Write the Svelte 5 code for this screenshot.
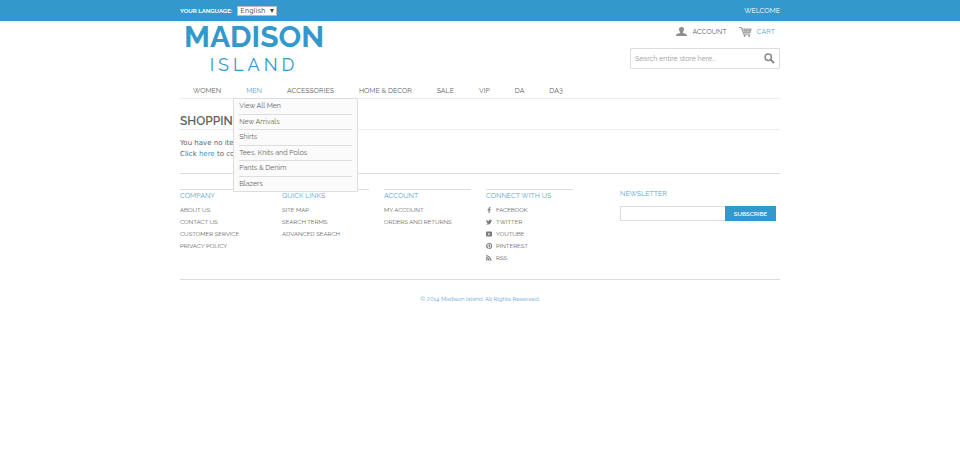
<script>
  const nav = ['WOMEN', 'MEN', 'ACCESSORIES', 'HOME & DECOR', 'SALE', 'VIP', 'DA', 'DA3'];
  const menMenu = ['View All Men', 'New Arrivals', 'Shirts', 'Tees, Knits and Polos', 'Pants & Denim', 'Blazers'];
  const columns = [
    { title: 'COMPANY', links: ['ABOUT US', 'CONTACT US', 'CUSTOMER SERVICE', 'PRIVACY POLICY'] },
    { title: 'QUICK LINKS', links: ['SITE MAP', 'SEARCH TERMS', 'ADVANCED SEARCH'] },
    { title: 'ACCOUNT', links: ['MY ACCOUNT', 'ORDERS AND RETURNS'] }
  ];
  const social = [
    { name: 'FACEBOOK', path: 'M9.5 16V9h2.3l.4-2.8H9.5V4.6c0-.8.3-1.3 1.4-1.3h1.4V.9C12 .8 11.200 .8 10.300 .8 8.100 .8 6.700 2 6.700 4.300v1.900H4.300V9h2.400v7z' },
    { name: 'TWITTER', path: 'M16 3.200c-.6.3-1.200.4-1.900.5.700-.4 1.200-1 1.400-1.800-.6.4-1.300.600-2.100.800A3.300 3.300 0 0 0 7.800 5.700 9.300 9.300 0 0 1 1.100 2.300a3.300 3.300 0 0 0 1 4.400c-.5 0-1-.2-1.500-.4 0 1.600 1.100 2.900 2.600 3.200-.5.1-1 .1-1.500 0 .4 1.300 1.600 2.300 3.100 2.300A6.600 6.600 0 0 1 0 13.100 9.300 9.300 0 0 0 14.400 4.900c.6-.4 1.200-1 1.600-1.700z' },
    { name: 'YOUTUBE', path: 'M2 1.500h12q2 0 2 2v9q0 2-2 2H2q-2 0-2-2v-9q0-2 2-2zM6 5v6l5-3z' },
    { name: 'PINTEREST', path: 'M8 0a8 8 0 0 0-2.900 15.400c-.1-.6-.1-1.600 0-2.300l1-4s-.3-.5-.3-1.200c0-1.100.7-2 1.500-2 .7 0 1 .5 1 1.200 0 .7-.4 1.700-.7 2.700-.2.800.4 1.500 1.200 1.500 1.400 0 2.500-1.500 2.500-3.700 0-1.900-1.400-3.200-3.300-3.200a3.500 3.500 0 0 0-3 5.600l-.4 1.200C3.500 10.700 3 9.400 3 8c0-2.700 1.900-5.100 5.400-5.100 2.900 0 5.100 2.100 5.100 4.800 0 2.900-1.800 5.200-4.300 5.200-.8 0-1.600-.4-1.900-1l-.9 3.700A8 8 0 1 0 8 0z' },
    { name: 'RSS', path: 'M2 10.500a2.200 2.200 0 1 0 0 4.400 2.200 2.200 0 0 0 0-4.400zM0 5.500v3c3.600 0 6.500 2.900 6.500 6.500h3C9.500 9.800 5.200 5.500 0 5.500zM0 .5v3c6.400 0 11.500 5.100 11.500 11.500h3C14.500 7 8 .5 0 .5z' }
  ];
</script>

<div class="topbar">
  <div class="wrap topbar-row">
    <div class="language">
      <label for="lang">YOUR LANGUAGE:</label>
      <span class="select">
        <select id="lang"><option>English</option><option>French</option><option>German</option></select>
        <svg viewBox="0 0 4 4" aria-hidden="true"><path d="M0 0h4L2 4z" fill="#444" /></svg>
      </span>
    </div>
    <span>WELCOME</span>
  </div>
</div>

<div class="wrap">
  <header>
    <a class="logo" href="/" aria-label="Madison Island"><span class="madison">MADISON</span><span class="island">ISLAND</span></a>
    <div class="tools">
      <div class="actions">
        <a href="#account">
          <svg width="11" height="9" viewBox="0 0 24 20" preserveAspectRatio="none" aria-hidden="true"><path fill="#8e8e8e" d="M12 0c4 0 6 2.400 5.400 6-.2 2.200-1 4-2.400 5.300v1.500c1 1.400 7.500 2 8.500 4.200.4 1 .5 2 .5 3H0c0-1 .1-2 .5-3 1-2.200 7.500-2.800 8.500-4.200v-1.500C7.600 10 6.800 8.200 6.600 6 6 2.400 8 0 12 0z" /></svg>
          ACCOUNT
        </a>
        <a class="cart" href="#cart">
          <svg width="13" height="10" viewBox="0 0 28 20" preserveAspectRatio="none" fill="none" stroke="#8e8e8e" aria-hidden="true"><path stroke-width="1.800" d="M0 1h5l5 13.500h14M6 4h20.500L24 11.500H9M7 7.700h18M12 4l1.500 7.500M17 4v7.500M22 4l-1 7.500" /><circle cx="12" cy="17.800" r="1.600" fill="#8e8e8e" /><circle cx="22" cy="17.800" r="1.600" fill="#8e8e8e" /></svg>
          CART
        </a>
      </div>
      <form class="search">
        <input type="search" aria-label="Search" placeholder="Search entire store here..." />
        <button type="button" aria-label="Search"><svg width="11" height="11" viewBox="0 0 22 22" fill="none" stroke="#8a8a8a" aria-hidden="true"><circle cx="8.500" cy="8.500" r="6.300" stroke-width="3" /><path d="M13 13l7 7" stroke-width="4" /></svg></button>
      </form>
    </div>
  </header>

  <nav>
    {#each nav as item}
      <div class="nav-item" class:active={item === 'MEN'}>
        <a href="#{item}">{item}</a>
        {#if item === 'MEN'}
          <ul class="dropdown">
            {#each menMenu as sub}<li><a href="#{sub}">{sub}</a></li>{/each}
          </ul>
        {/if}
      </div>
    {/each}
  </nav>

  <main>
    <h1>SHOPPING CART IS EMPTY</h1>
    <p>You have no items in your shopping cart.</p>
    <p>Click <a href="/">here</a> to continue shopping.</p>
  </main>

  <footer>
    <div class="links">
      {#each columns as col}
        <section>
          <h2>{col.title}</h2>
          <ul>{#each col.links as link}<li><a href="#{link}">{link}</a></li>{/each}</ul>
        </section>
      {/each}
      <section>
        <h2>CONNECT WITH US</h2>
        <ul>
          {#each social as s}
            <li><a class="social" href="#{s.name}"><svg width="6" height="6" viewBox="0 0 16 16" aria-hidden="true"><path fill="#7c7c7c" fill-rule="evenodd" d={s.path} /></svg>{s.name}</a></li>
          {/each}
        </ul>
      </section>
    </div>
    <form class="newsletter">
      <label for="email">NEWSLETTER</label>
      <div class="subscribe">
        <input id="email" type="email" />
        <button type="button">SUBSCRIBE</button>
      </div>
    </form>
  </footer>
  <small>© 2014 Madison Island. All Rights Reserved.</small>
</div>

<style>
  :global(body) { background: #fff; }
  .topbar, .wrap { font-family: Raleway, Lato, sans-serif; font-size: 7px; color: #636363; }
  .wrap { max-width: 600px; margin: 0 auto; }
  a { color: inherit; text-decoration: none; }
  ul { list-style: none; margin: 0; padding: 0; }
  h1, h2, p { margin: 0; }
  svg { display: block; flex: none; }
  input, button, select { font: inherit; margin: 0; box-sizing: border-box; border-radius: 0; outline: 0; }
  button { border: 0; padding: 0; cursor: pointer; }

  .topbar { background: #3399cc; color: #fff; }
  .topbar .wrap { color: #fff; }
  .topbar-row { display: flex; justify-content: space-between; align-items: center; height: 21px; line-height: 9px; }
  .language { display: flex; align-items: center; gap: 5px; }
  .language label { font-size: 6px; font-weight: 700; }
  .select { position: relative; }
  select { display: block; appearance: none; width: 40px; height: 10px; padding: 0 2px; border: 1px solid #bbb; background: #fff; color: #636363; font: 7px/8px "DejaVu Sans", sans-serif; }
  .select svg { position: absolute; right: 3px; top: 3px; width: 4px; height: 4px; pointer-events: none; }

  header { display: flex; justify-content: space-between; align-items: flex-start; height: 62px; }
  .logo { display: flex; flex-direction: column; align-items: center; padding-left: 4px; color: #3399cc; }
  .madison { font-size: 30px; line-height: 32px; font-weight: 700; }
  .island { font-size: 18px; line-height: 24px; letter-spacing: 4px; }
  .tools { width: 150px; }
  .actions { display: flex; justify-content: flex-end; gap: 12px; height: 27px; padding-right: 5px; box-sizing: border-box; }
  .actions a { display: flex; align-items: center; gap: 5px; height: 21px; }
  .actions .cart, nav .active > a { color: #5ba4d4; }
  .search { display: flex; align-items: center; height: 21px; box-sizing: border-box; border: 1px solid #ddd; border-radius: 1px; }
  .search input { flex: 1; min-width: 0; border: 0; padding: 0 4px; background: none; }
  .search input::placeholder { color: #999; opacity: 1; }
  .search button { background: none; padding-right: 4px; }

  nav { display: flex; gap: 25px; height: 15px; padding-left: 13px; border-bottom: 1px solid #eee; }
  .nav-item { position: relative; line-height: 16px; }
  .dropdown { position: absolute; z-index: 2; left: -13px; top: 15px; width: 125px; height: 94px; display: flex; flex-direction: column; box-sizing: border-box; padding: 0 5px; border: 1px solid #ddd; background: #fbfbfb; }
  .dropdown li { flex: 1; line-height: 14px; }
  .dropdown li + li { border-top: 1px solid #ddd; }

  main { height: 74px; border-bottom: 1px solid #ddd; font: 7px/11px "DejaVu Sans", sans-serif; }
  h1 { margin-bottom: 8px; padding-top: 14px; border-bottom: 1px solid #eee; font: 600 12px/16px Raleway, Lato, sans-serif; }
  main a { color: #3399cc; }

  footer { display: flex; justify-content: space-between; padding: 15px 0; border-bottom: 1px solid #ddd; }
  .links { flex: 1; max-width: 393px; display: grid; grid-template-columns: repeat(4, 1fr); gap: 15px; }
  h2 { padding: 1px 0; margin-bottom: 2px; border-top: 1px solid #ddd; font-size: 7px; line-height: 10px; font-weight: 400; color: #5ba4d4; white-space: nowrap; }
  section li { font-size: 6px; line-height: 12px; white-space: nowrap; }
  .social { display: flex; align-items: center; gap: 4px; }
  .newsletter { width: 160px; }
  .newsletter label { display: block; line-height: 10px; margin-bottom: 7px; color: #5ba4d4; }
  .subscribe { display: flex; height: 15px; margin-right: 4px; }
  .subscribe input { flex: 1; min-width: 0; border: 1px solid #ddd; border-right: 0; }
  .subscribe button { width: 51px; background: #3399cc; color: #fff; font-size: 6px; font-weight: 600; }
  small { display: block; margin-top: 14px; text-align: center; font-size: 6px; line-height: 10px; color: #5ba4d4; }
</style>
